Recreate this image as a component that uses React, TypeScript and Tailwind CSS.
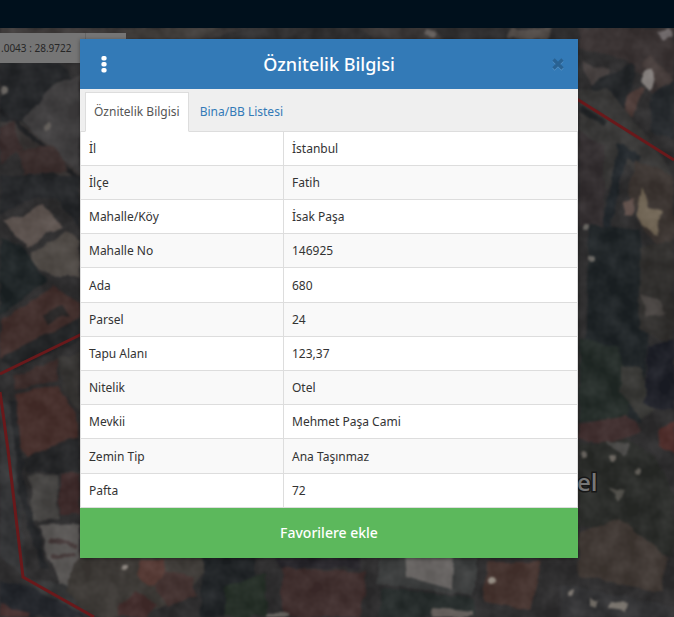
import { useState } from 'react'

const TABS = ['Öznitelik Bilgisi', 'Bina/BB Listesi']

const ATTRIBUTES = [
  { label: 'İl', value: 'İstanbul' },
  { label: 'İlçe', value: 'Fatih' },
  { label: 'Mahalle/Köy', value: 'İsak Paşa' },
  { label: 'Mahalle No', value: '146925' },
  { label: 'Ada', value: '680' },
  { label: 'Parsel', value: '24' },
  { label: 'Tapu Alanı', value: '123,37' },
  { label: 'Nitelik', value: 'Otel' },
  { label: 'Mevkii', value: 'Mehmet Paşa Cami' },
  { label: 'Zemin Tip', value: 'Ana Taşınmaz' },
  { label: 'Pafta', value: '72' },
]

// Dimmed satellite imagery with the district boundary on top
function SatelliteMap() {
  return (
    <svg
      className="absolute inset-0 h-full w-full"
      viewBox="0 28 674 589"
      preserveAspectRatio="xMidYMid slice"
      aria-hidden="true"
    >
      <defs>
        <filter id="soft" x="-5%" y="-5%" width="110%" height="110%" colorInterpolationFilters="sRGB">
          <feTurbulence type="fractalNoise" baseFrequency="0.06" numOctaves="2" seed="8" result="noise" />
          <feDisplacementMap in="SourceGraphic" in2="noise" scale="8" xChannelSelector="R" yChannelSelector="G" result="warped" />
          <feGaussianBlur in="warped" stdDeviation="1" />
        </filter>
        <filter id="grain" x="0" y="0" width="100%" height="100%" colorInterpolationFilters="sRGB">
          <feTurbulence type="fractalNoise" baseFrequency="0.05" numOctaves="3" seed="3" />
          <feColorMatrix values="0.8 0 0 0 -0.22  0.78 0 0 0 -0.21  0.78 0 0 0 -0.21  0 0 0 0 0.16" />
        </filter>
      </defs>
      <rect y="28" width="674" height="589" fill="#302f30" />
      <g filter="url(#soft)">
        {/* top strip */}
        <path d="M0 28H240L205 42H0z" fill="#3f3b3a" />
        <path d="M125 28h95l-20 11h-75z" fill="#45413e" />
        <path d="M360 28h75l10 11h-70z" fill="#3d3938" />
        <path d="M512 28h42l-8 11h-38z" fill="#57504c" />
        <path d="M425 29l12 3-3 6-10-3z" fill="#6b6562" />

        {/* left column */}
        <path d="M0 62h60L80 90V230L0 120z" fill="#242629" />
        <path d="M52 86l28-12v110L22 122z" fill="#444243" />
        <path d="M0 122l20 0 62 54v16L22 150z" fill="#3a3635" />
        <path d="M0 110l80 70" fill="none" stroke="#1f2023" strokeWidth="4" />
        <path d="M0 128l12-6 10 26-22 18z" fill="#3a2b2b" />
        <path d="M16 150l40-4 12 24-42 6z" fill="#3f302f" />
        <path d="M0 176h80v30L40 196 0 214z" fill="#25272a" />
        <circle cx="3" cy="91" r="4" fill="#77726d" />
        <circle cx="46" cy="125" r="4" fill="#69645f" />
        <path d="M2 222l22-8 18-11 20 24-16 6-18 16z" fill="#655a55" />
        <path d="M32 252l34-21 14 10v36H56L32 264z" fill="#544e49" />
        <path d="M0 238l26 12 20 30-46 36z" fill="#1d2426" />
        <path d="M0 320l55-34 25 18v14L20 352 0 358z" fill="#46302d" />
        <path d="M42 316l20-9 8 8-22 8z" fill="#262424" />
        <path d="M0 358l80-40v22L14 370z" fill="#222426" />
        <path d="M14 374l44-14v20l-42 10z" fill="#422f2d" />
        <path d="M58 360l22-8v60L64 392z" fill="#393735" />
        <path d="M16 394l42-8 20 30v22L30 460 18 440z" fill="#4b302c" />
        <path d="M20 460l60-24v36H28z" fill="#222325" />
        <path d="M29 475l28-1 2 45-26 2z" fill="#4c4a48" />
        <path d="M60 473h20v42H60z" fill="#402a2a" />
        <path d="M0 400l14 10 12 166-26-20z" fill="#37383a" />
        <path d="M12 400l12 100 22 70" fill="none" stroke="#222427" strokeWidth="7" />
        <path d="M38 526l42-2v34l22 18-40 18z" fill="#605d5b" />
        <path d="M48 540l30 6M52 556l24-2" stroke="#493b3b" strokeWidth="4" />
        <path d="M26 580l36 2 34 35H60z" fill="#38393a" />
        <path d="M0 580l32 8 54 29H0z" fill="#22252b" />
        <path d="M0 604l30 8v5H0z" fill="#482e2d" />

        {/* below the dialog */}
        <path d="M80 552h130l-20 46-60 19H92L66 590z" fill="#403c38" />
        <path d="M142 560h20l4 12-14 16-14-14z" fill="#583832" />
        <path d="M164 570l30 6 4 20-30 10-14-16z" fill="#473331" />
        <path d="M118 606l18-14 20 12-10 13h-28z" fill="#472e2d" />
        <path d="M204 552h50l6 65h-60z" fill="#202427" />
        <path d="M224 586l42-12v43h-42z" fill="#253027" />
        <path d="M282 568l84 4-4 45h-80z" fill="#432f2e" />
        <path d="M272 552h90v16h-80z" fill="#27252b" />
        <path d="M380 552l98 0-4 44-98-12z" fill="#3f4141" />
        <path d="M404 552h50l-2 38-46-14z" fill="#716d6b" />
        <path d="M384 588l90 10v19h-98z" fill="#262d2c" />
        <path d="M434 608l38 4v5h-40z" fill="#6d6662" />
        <path d="M486 562h56l-12 48-46-8z" fill="#4b3631" />
        <circle cx="124" cy="569" r="3" fill="#99928a" />
        <circle cx="493" cy="580" r="4" fill="#aaa095" />
        <path d="M266 613h24v4h-24z" fill="#716d68" />

        {/* right column */}
        <path d="M578 28h96v50l-20 18-30-38-46-10z" fill="#3c3434" />
        <path d="M580 60l28 10 4 14-20 2z" fill="#4c4544" />
        <path d="M590 84l44-20-4 60-30-8z" fill="#24272a" />
        <path d="M656 32l12-4 6 8-10 6z" fill="#797273" />
        <path d="M640 64l12-8 22 26v20z" fill="#493e3c" />
        <path d="M641 73l10-5 6 12-7 9-11-5z" fill="#938d8a" />
        <path d="M630 92l14-4-12 30-8-2z" fill="#503c38" />
        <path d="M650 94l24-14v60l-22-8z" fill="#25292d" />
        <path d="M578 90l30-2 66 86v20l-50-30-20 30-26-4z" fill="#3b3a39" />
        <path d="M580 108l24 16" stroke="#212427" strokeWidth="7" />
        <path d="M578 130l26 16v80h-26z" fill="#363032" />
        <path d="M640 160l-18-10-18 90" fill="none" stroke="#20262b" strokeWidth="9" />
        <path d="M636 160l38 16v80l-30-24-16-40z" fill="#3f3733" />
        <path d="M624 200l10-2-2 18-9-1z" fill="#66534d" />
        <path d="M640 186l10 22 14 4-8 10 2 12-14-6-8-14z" fill="#786b58" />
        <path d="M590 224l50 6 10 90-10 104-56-10z" fill="#1e2427" />
        <path d="M640 248l34-10v110l-36-20z" fill="#33312f" />
        <path d="M580 338l40 10 10 70-50 4z" fill="#232c28" />
        <path d="M640 294l18 4 8 16-20 2z" fill="#4c4744" />
        <path d="M620 364l20 4 16 42-16 10-20-30z" fill="#393936" />
        <path d="M648 346l26-6v72l-30-8z" fill="#1d1f28" />
        <path d="M578 424l50-8 14 16-30 12-34-6z" fill="#453131" />
        <path d="M658 430l16-8v34l-14-10z" fill="#552f2c" />
        <path d="M578 444l50-6 30 20 16 40v60l-50-20-46-14z" fill="#2b2d2a" />
        <path d="M608 440l22 2-8 16z" fill="#51504e" />
        <circle cx="586" cy="228" r="3" fill="#77746f" />
        <circle cx="591" cy="258" r="3" fill="#77746f" />
        <circle cx="584" cy="455" r="4" fill="#75706a" />
        <circle cx="612" cy="459" r="3" fill="#77716a" />
        <circle cx="638" cy="470" r="3" fill="#706c65" />
        <path d="M610 488l14 2-6 12z" fill="#5c5a54" />
        <path d="M580 532l38-14 50 40-8 34-82-16z" fill="#443b36" />
        <path d="M560 584l114 22v11H560z" fill="#353537" />
        <path d="M610 602l20 2-2 7-20-2zM588 597l9 3-1 6-8-2z" fill="#837d75" />
        <circle cx="571" cy="593" r="3" fill="#88817a" />
      </g>
      <rect y="28" width="674" height="589" filter="url(#grain)" />
      <g fill="none" stroke="#69191b" strokeWidth="3">
        <path d="M572 96L674 160" />
        <path d="M84 333L0 374" />
        <path d="M0 392L8 450L23 577L94 617" />
      </g>
      <text
        x="577"
        y="491"
        className="font-['Open_Sans','Noto_Sans',sans-serif] text-[24px] font-semibold"
        fill="#777777"
        stroke="#171717"
        strokeWidth="3"
        paintOrder="stroke"
      >
        el
      </text>
    </svg>
  )
}

export default function App() {
  const [activeTab, setActiveTab] = useState(0)

  return (
    <div className="flex min-h-screen flex-col bg-[#302f30] font-['Noto_Sans','Open_Sans',sans-serif] text-[#333]">
      <header className="h-7 bg-[#00101c]" />
      <main className="relative flex-1 overflow-hidden">
        <SatelliteMap />

        {/* Cursor coordinates */}
        <div className="absolute left-0 top-[5px] flex h-[30px] w-[126px] items-center bg-[#757575]">
          <span className="flex h-full w-[86px] items-center border-r border-[#666] pl-px text-[10px] text-[#262626]">
            .0043 : 28.9722
          </span>
        </div>

        <section
          role="dialog"
          aria-labelledby="dialog-title"
          className="relative mb-14 ml-20 mr-24 mt-[11px] bg-white shadow-[0_1px_4px_rgba(0,0,0,0.4)]"
        >
          <div className="flex h-[50px] items-center bg-[#337ab7] pl-3 pr-1 text-white">
            <button aria-label="Menü" className="flex h-6 w-6 items-center justify-center">
              <svg width="6" height="18" viewBox="0 0 6 18" fill="currentColor" aria-hidden="true">
                <rect x="0.4" y="1" width="5.2" height="4.6" rx="1.8" />
                <rect x="0.4" y="7" width="5.2" height="4.6" rx="1.8" />
                <rect x="0.4" y="13" width="5.2" height="4.6" rx="1.8" />
              </svg>
            </button>
            <h1 id="dialog-title" className="flex-1 text-center text-[18px] font-medium leading-6">
              Öznitelik Bilgisi
            </h1>
            <button aria-label="Kapat" className="flex h-6 w-8 items-center justify-center">
              <svg width="14" height="14" viewBox="0 0 14 14" fill="none" strokeWidth="3.2" aria-hidden="true">
                <path d="M2.5 3.5l9 9M11.5 3.5l-9 9" stroke="#5390c3" />
                <path d="M2.5 2.5l9 9M11.5 2.5l-9 9" stroke="#296293" />
              </svg>
            </button>
          </div>

          <div role="tablist" className="flex h-[43px] items-end border-b border-[#ddd] bg-[#efefef] pl-[5px]">
            {TABS.map((tab, i) => (
              <button
                key={tab}
                role="tab"
                aria-selected={activeTab === i}
                onClick={() => setActiveTab(i)}
                className={`-mb-px mr-[2px] h-10 border px-2 text-[12px] ${
                  activeTab === i
                    ? 'border-[#ddd] border-b-white bg-white text-[#555]'
                    : 'border-transparent text-[#337ab7]'
                }`}
              >
                {tab}
              </button>
            ))}
          </div>

          <table className="h-[376px] w-full table-fixed border-collapse text-[12px] leading-[18px]">
            <colgroup>
              <col className="w-[203px]" />
              <col />
            </colgroup>
            <tbody>
              {ATTRIBUTES.map(row => (
                <tr key={row.label} className="even:bg-[#f9f9f9]">
                  <th scope="row" className="border border-t-0 border-[#ddd] px-2 pt-px text-left font-normal">
                    {row.label}
                  </th>
                  <td className="border border-t-0 border-[#ddd] px-2 pt-px">{row.value}</td>
                </tr>
              ))}
            </tbody>
          </table>

          <button className="h-[50px] w-full bg-[#5cb85c] pb-[2px] text-[14px] font-medium text-white">
            Favorilere ekle
          </button>
        </section>
      </main>
    </div>
  )
}
